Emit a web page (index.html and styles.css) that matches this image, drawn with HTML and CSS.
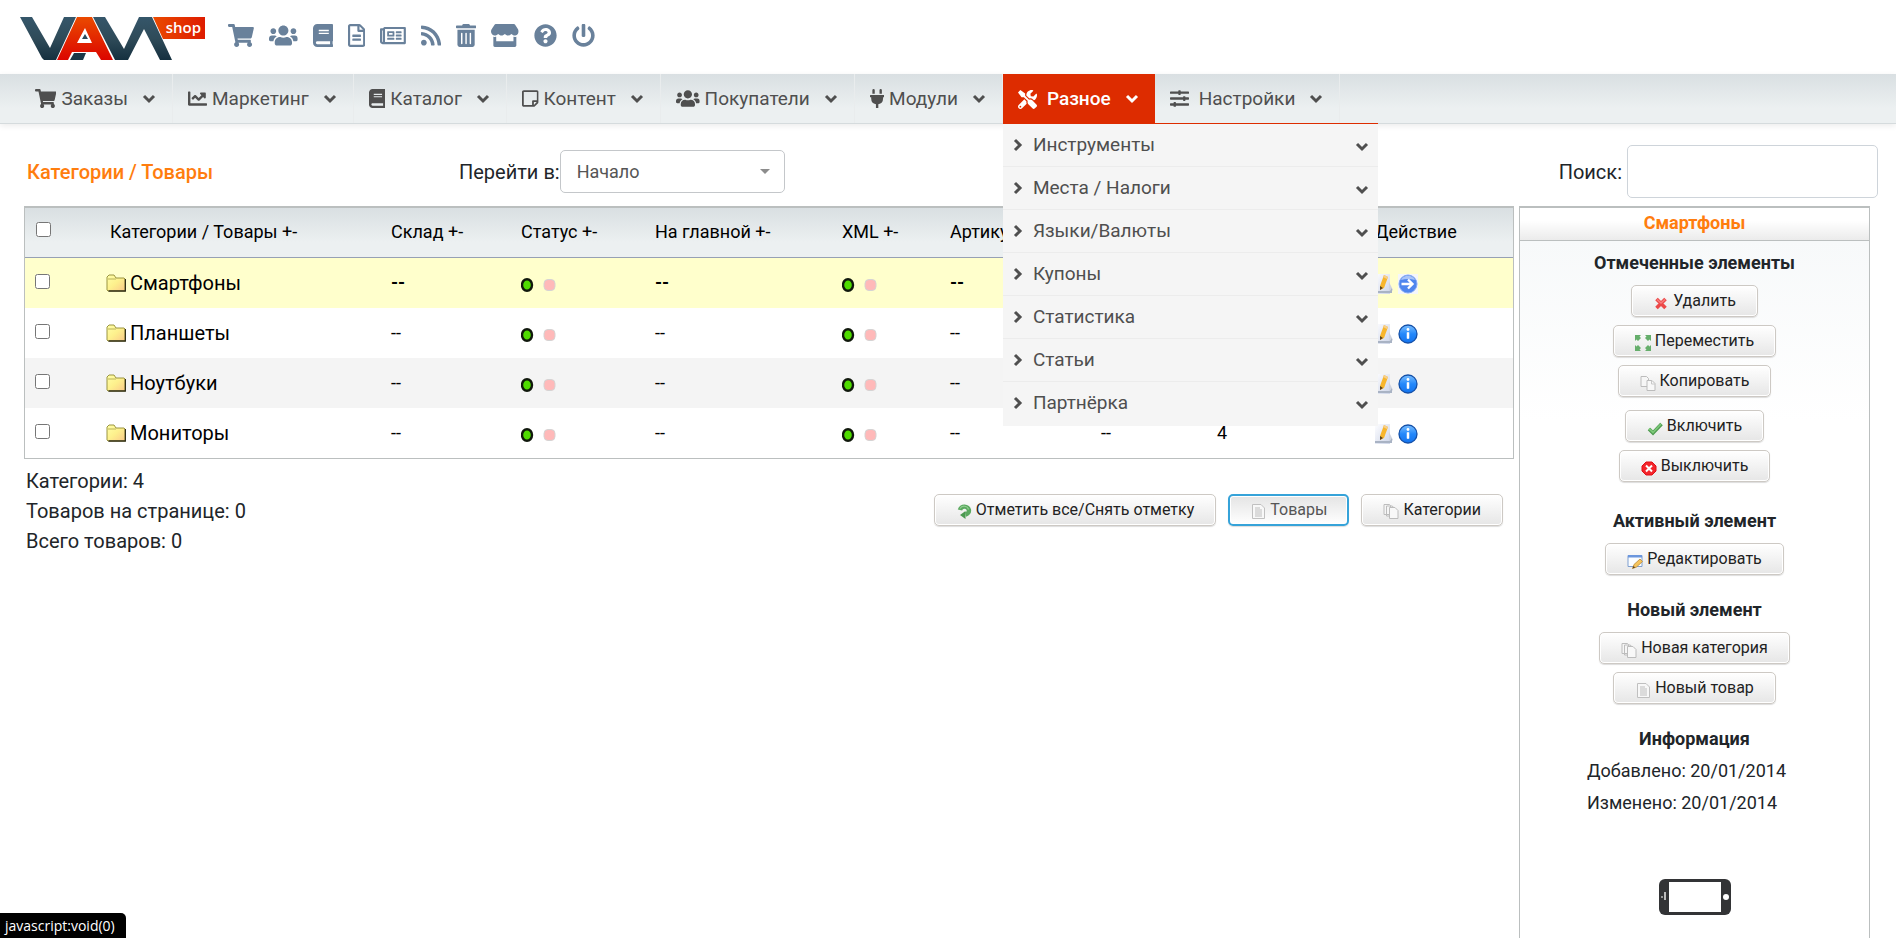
FILE: index.html
```html
<!DOCTYPE html>
<html lang="ru">
<head>
<meta charset="utf-8">
<title>Категории / Товары</title>
<link rel="stylesheet" href="styles.css">
</head>
<body>
<svg class="sprite" aria-hidden="true">
  <defs>
    <linearGradient id="g-steel" x1="0" y1="0" x2="0" y2="1"><stop offset="0" stop-color="#35566a"/><stop offset=".5" stop-color="#2f4b59"/><stop offset="1" stop-color="#15303f"/></linearGradient>
    <linearGradient id="g-red" x1="0" y1="0" x2="0" y2="1"><stop offset="0" stop-color="#ea4a00"/><stop offset="1" stop-color="#dc0500"/></linearGradient>
    <linearGradient id="g-tag" x1="0" y1="0" x2="1" y2="0"><stop offset="0" stop-color="#ea4a00"/><stop offset="1" stop-color="#de1c00"/></linearGradient>
    <linearGradient id="g-folder" x1="0" y1="0" x2="1" y2="1"><stop offset="0" stop-color="#ffffa8"/><stop offset=".5" stop-color="#fdf08c"/><stop offset="1" stop-color="#fbc98a"/></linearGradient>
    <linearGradient id="g-blue" x1="0" y1="0" x2="0" y2="1"><stop offset="0" stop-color="#7cc0ff"/><stop offset=".5" stop-color="#2388fb"/><stop offset="1" stop-color="#1474ee"/></linearGradient>
    <linearGradient id="g-paper" x1="0" y1="0" x2="1" y2="1"><stop offset="0" stop-color="#fdfdff"/><stop offset="1" stop-color="#cdd5e8"/></linearGradient>
  </defs>
  <symbol id="i-cart" viewBox="0 0 576 512"><path d="M528.12 301.319l47.273-208C578.806 78.301 567.391 64 551.99 64H159.208l-9.166-44.81C147.758 8.021 137.93 0 126.529 0H24C10.745 0 0 10.745 0 24v16c0 13.255 10.745 24 24 24h69.883l70.248 343.435C147.325 417.1 136 435.222 136 456c0 30.928 25.072 56 56 56s56-25.072 56-56c0-15.674-6.447-29.835-16.824-40h209.647C430.447 426.165 424 440.326 424 456c0 30.928 25.072 56 56 56s56-25.072 56-56c0-22.172-12.888-41.332-31.579-50.405l5.517-24.276c3.413-15.018-8.002-29.319-23.403-29.319H218.117l-6.545-32h293.145c11.206 0 20.92-7.754 23.403-18.681z"/></symbol>
  <symbol id="i-users" viewBox="0 0 640 512"><path d="M96 224c35.3 0 64-28.7 64-64s-28.7-64-64-64-64 28.7-64 64 28.7 64 64 64zm448 0c35.3 0 64-28.7 64-64s-28.7-64-64-64-64 28.7-64 64 28.7 64 64 64zm32 32h-64c-17.6 0-33.5 7.1-45.1 18.6 40.3 22.1 68.9 62 75.1 109.4h66c17.7 0 32-14.3 32-32v-32c0-35.3-28.7-64-64-64zm-256 0c61.9 0 112-50.1 112-112S381.9 32 320 32 208 82.1 208 144s50.1 112 112 112zm76.8 32h-8.3c-20.8 10-43.9 16-68.5 16s-47.6-6-68.5-16h-8.3C179.6 288 128 339.6 128 403.2V432c0 26.5 21.5 48 48 48h288c26.5 0 48-21.5 48-48v-28.8c0-63.6-51.6-115.2-115.2-115.2zm-223.7-13.4C161.5 263.1 145.6 256 128 256H64c-35.3 0-64 28.7-64 64v32c0 17.7 14.3 32 32 32h65.9c6.3-47.4 34.9-87.3 75.2-109.4z"/></symbol>
  <symbol id="i-book" viewBox="0 0 448 512"><path d="M448 360V24c0-13.3-10.7-24-24-24H96C43 0 0 43 0 96v320c0 53 43 96 96 96h328c13.3 0 24-10.7 24-24v-16c0-7.5-3.5-14.3-8.9-18.7-4.2-15.4-4.2-59.3 0-74.7 5.4-4.3 8.9-11.1 8.9-18.6zM128 134c0-3.3 2.7-6 6-6h212c3.3 0 6 2.7 6 6v20c0 3.3-2.7 6-6 6H134c-3.3 0-6-2.7-6-6v-20zm0 64c0-3.3 2.7-6 6-6h212c3.3 0 6 2.7 6 6v20c0 3.3-2.7 6-6 6H134c-3.3 0-6-2.7-6-6v-20zm253.4 250H96c-17.7 0-32-14.3-32-32 0-17.6 14.4-32 32-32h285.4c-1.9 17.1-1.9 46.9 0 64z"/></symbol>
  <symbol id="i-file" viewBox="0 0 384 512"><path d="M288 248v28c0 6.600-5.400 12-12 12H108c-6.600 0-12-5.400-12-12v-28c0-6.600 5.400-12 12-12h168c6.600 0 12 5.400 12 12zm-12 72H108c-6.600 0-12 5.400-12 12v28c0 6.600 5.400 12 12 12h168c6.600 0 12-5.400 12-12v-28c0-6.600-5.400-12-12-12zm108-188.100V464c0 26.500-21.500 48-48 48H48c-26.500 0-48-21.500-48-48V48C0 21.500 21.500 0 48 0h204.100C264.800 0 277 5.100 286 14.100L369.900 98c9 8.900 14.100 21.200 14.100 33.900zm-128-80V128h76.100L256 51.900zM336 464V176H232c-13.300 0-24-10.700-24-24V48H48v416h288z"/></symbol>
  <symbol id="i-news" viewBox="0 0 576 512"><path d="M552 64H112c-20.858 0-38.643 13.377-45.248 32H24c-13.255 0-24 10.745-24 24v272c0 30.928 25.072 56 56 56h496c13.255 0 24-10.745 24-24V88c0-13.255-10.745-24-24-24zM48 392V144h16v248c0 4.411-3.589 8-8 8s-8-3.589-8-8zm480 8H111.422c.374-2.614.578-5.283.578-8V112h416v288zM172 280h136c6.627 0 12-5.373 12-12v-96c0-6.627-5.373-12-12-12H172c-6.627 0-12 5.373-12 12v96c0 6.627 5.373 12 12 12zm28-80h80v40h-80v-40zm-40 140v-24c0-6.627 5.373-12 12-12h136c6.627 0 12 5.373 12 12v24c0 6.627-5.373 12-12 12H172c-6.627 0-12-5.373-12-12zm192 0v-24c0-6.627 5.373-12 12-12h104c6.627 0 12 5.373 12 12v24c0 6.627-5.373 12-12 12H364c-6.627 0-12-5.373-12-12zm0-144v-24c0-6.627 5.373-12 12-12h104c6.627 0 12 5.373 12 12v24c0 6.627-5.373 12-12 12H364c-6.627 0-12-5.373-12-12zm0 72v-24c0-6.627 5.373-12 12-12h104c6.627 0 12 5.373 12 12v24c0 6.627-5.373 12-12 12H364c-6.627 0-12-5.373-12-12z"/></symbol>
  <symbol id="i-rss" viewBox="0 0 448 512"><path d="M128.081 415.959c0 35.369-28.672 64.041-64.041 64.041S0 451.328 0 415.959s28.672-64.041 64.041-64.041 64.040 28.673 64.040 64.041zm175.660 47.250c-8.354-154.600-132.185-278.587-286.950-286.950C7.656 175.765 0 183.105 0 192.253v48.069c0 8.415 6.490 15.472 14.887 16.018 111.832 7.284 201.473 96.702 208.772 208.772.547 8.397 7.604 14.887 16.018 14.887h48.069c9.149.001 16.489-7.655 15.995-16.790zm144.249.288C439.596 229.677 251.465 40.445 16.503 32.010 7.473 31.686 0 38.981 0 48.016v48.068c0 8.625 6.835 15.645 15.453 15.999 191.179 7.839 344.627 161.316 352.465 352.465.353 8.618 7.373 15.453 15.999 15.453h48.068c9.034-.001 16.329-7.474 16.005-16.504z"/></symbol>
  <symbol id="i-trash" viewBox="0 0 448 512"><path d="M32 464a48 48 0 0 0 48 48h288a48 48 0 0 0 48-48V128H32zm272-256a16 16 0 0 1 32 0v224a16 16 0 0 1-32 0zm-96 0a16 16 0 0 1 32 0v224a16 16 0 0 1-32 0zm-96 0a16 16 0 0 1 32 0v224a16 16 0 0 1-32 0zM432 32H312l-9.400-18.700A24 24 0 0 0 281.100 0H166.800a23.720 23.720 0 0 0-21.400 13.300L136 32H16A16 16 0 0 0 0 48v32a16 16 0 0 0 16 16h416a16 16 0 0 0 16-16V48a16 16 0 0 0-16-16z"/></symbol>
  <symbol id="i-store" viewBox="0 0 616 512"><path d="M602 118.600L537.100 15C531.300 5.700 521 0 510 0H106C95 0 84.700 5.700 78.900 15L14 118.600c-33.500 53.500-3.800 127.900 58.800 136.400 4.500.6 9.100.9 13.700.9 29.600 0 55.800-13 73.800-33.100 18 20.100 44.300 33.100 73.800 33.100 29.600 0 55.800-13 73.800-33.100 18 20.100 44.300 33.100 73.800 33.100 29.600 0 55.800-13 73.800-33.100 18.100 20.100 44.300 33.100 73.800 33.100 4.700 0 9.200-.3 13.700-.9 62.800-8.400 92.600-82.800 59-136.400zM529.500 288c-10 0-19.900-1.500-29.500-3.800V384H116v-99.800c-9.600 2.200-19.500 3.800-29.500 3.800-6 0-12.100-.4-18-1.200-5.600-.8-11.100-2.100-16.400-3.600V480c0 17.700 14.300 32 32 32h448c17.700 0 32-14.300 32-32V283.200c-5.400 1.600-10.800 2.900-16.400 3.600-6.100.8-12.100 1.200-18.200 1.200z"/></symbol>
  <symbol id="i-help" viewBox="0 0 512 512"><path d="M504 256c0 136.997-111.043 248-248 248S8 392.997 8 256C8 119.083 119.043 8 256 8s248 111.083 248 248zM262.655 90c-54.497 0-89.255 22.957-116.549 63.758-3.536 5.286-2.353 12.415 2.715 16.258l34.699 26.310c5.205 3.947 12.621 3.008 16.665-2.122 17.864-22.658 30.113-35.797 57.303-35.797 20.429 0 45.698 13.148 45.698 32.958 0 14.976-12.363 22.667-32.534 33.976C247.128 238.528 216 254.941 216 296v4c0 6.627 5.373 12 12 12h56c6.627 0 12-5.373 12-12v-1.333c0-28.462 83.186-29.647 83.186-106.667 0-58.002-60.165-102-116.531-102zM256 338c-25.365 0-46 20.635-46 46 0 25.364 20.635 46 46 46s46-20.636 46-46c0-25.365-20.635-46-46-46z"/></symbol>
  <symbol id="i-power" viewBox="0 0 512 512"><path d="M400 54.100c63 45 104 118.600 104 201.900 0 136.800-110.800 247.700-247.500 248C120 504.300 8.200 393 8 256.400 7.900 173.100 48.900 99.300 111.800 54.200c11.700-8.300 28-4.800 35 7.700L162.600 90c5.900 10.500 3.100 23.800-6.600 31-41.500 30.800-68 79.600-68 134.900-.1 92.300 74.500 168.100 168 168.100 91.600 0 168.600-74.200 168-169.100-.3-51.800-24.700-101.800-68.100-134-9.700-7.200-12.400-20.500-6.500-30.900l15.800-28.100c7-12.400 23.200-16.100 34.800-7.800zM296 264V24c0-13.300-10.700-24-24-24h-32c-13.300 0-24 10.700-24 24v240c0 13.300 10.700 24 24 24h32c13.300 0 24-10.700 24-24z"/></symbol>
  <symbol id="i-chart" viewBox="0 0 512 512"><path d="M496 384H64V80c0-8.840-7.160-16-16-16H16C7.160 64 0 71.160 0 80v336c0 17.670 14.330 32 32 32h464c8.840 0 16-7.160 16-16v-32c0-8.840-7.160-16-16-16zM464 96H345.940c-21.380 0-32.090 25.850-16.970 40.970l32.400 32.400L288 242.750l-73.370-73.370c-12.500-12.500-32.760-12.500-45.250 0l-68.690 68.690c-6.250 6.250-6.250 16.380 0 22.630l22.620 22.620c6.250 6.250 16.380 6.250 22.630 0L192 237.250l73.370 73.370c12.500 12.500 32.760 12.500 45.250 0l96-96 32.400 32.400c15.120 15.120 40.970 4.410 40.970-16.970V112c.01-8.840-7.150-16-15.990-16z"/></symbol>
  <symbol id="i-note" viewBox="0 0 448 512"><path d="M448 348.106V80c0-26.510-21.490-48-48-48H48C21.490 32 0 53.490 0 80v351.988c0 26.510 21.490 48 48 48h268.118a48 48 0 0 0 33.941-14.059l83.882-83.882A48 48 0 0 0 448 348.106zm-128 80.005v-76.118h76.118L320 428.111zM400 80v223.988H296c-13.255 0-24 10.745-24 24v104H48V80h352z"/></symbol>
  <symbol id="i-plug" viewBox="0 0 384 512"><path d="M320,32a32,32,0,0,0-64,0v96h64Zm48,128H16A16,16,0,0,0,0,176v32a16,16,0,0,0,16,16H32v32A160.070,160.070,0,0,0,160,412.800V512h64V412.800A160.070,160.070,0,0,0,352,256V224h16a16,16,0,0,0,16-16V176A16,16,0,0,0,368,160ZM128,32a32,32,0,0,0-64,0v96h64Z"/></symbol>
  <symbol id="i-tools" viewBox="0 0 512 512"><path d="M501.100 395.700L384 278.600c-23.100-23.100-57.600-27.600-85.400-13.900L192 158.100V96L64 0 0 64l96 128h62.100l106.600 106.600c-13.600 27.800-9.200 62.300 13.900 85.400l117.100 117.100c14.600 14.600 38.200 14.600 52.700 0l52.700-52.700c14.500-14.600 14.500-38.200 0-52.700zM331.700 225c28.300 0 54.900 11 74.900 31l19.400 19.400c15.800-6.900 30.800-16.500 43.800-29.500 37.100-37.100 49.700-89.300 37.900-136.700-2.200-9-13.500-12.100-20.100-5.500l-74.400 74.400-67.900-11.300L334 98.900l74.400-74.400c6.600-6.600 3.400-17.900-5.700-20.200-47.400-11.700-99.600.9-136.600 37.900-28.500 28.500-41.900 66.100-41.200 103.600l82.100 82.100c8.100-1.900 16.500-2.900 24.700-2.900zm-103.900 82l-56.700-56.700L18.700 402.800c-25 25-25 65.500 0 90.500s65.500 25 90.500 0l123.600-123.600c-7.600-19.900-9.900-41.600-5-62.700zM64 472c-13.200 0-24-10.800-24-24 0-13.300 10.700-24 24-24s24 10.700 24 24c0 13.200-10.700 24-24 24z"/></symbol>
  <symbol id="i-sliders" viewBox="0 0 512 512"><path d="M496 384H160v-16c0-8.800-7.200-16-16-16h-32c-8.800 0-16 7.200-16 16v16H16c-8.800 0-16 7.200-16 16v32c0 8.800 7.200 16 16 16h80v16c0 8.800 7.200 16 16 16h32c8.800 0 16-7.200 16-16v-16h336c8.800 0 16-7.200 16-16v-32c0-8.800-7.200-16-16-16zm0-160h-80v-16c0-8.800-7.200-16-16-16h-32c-8.800 0-16 7.200-16 16v16H16c-8.800 0-16 7.200-16 16v32c0 8.800 7.200 16 16 16h336v16c0 8.800 7.200 16 16 16h32c8.800 0 16-7.200 16-16v-16h80c8.800 0 16-7.200 16-16v-32c0-8.800-7.200-16-16-16zm0-160H288V48c0-8.800-7.200-16-16-16h-32c-8.800 0-16 7.200-16 16v16H16C7.200 64 0 71.200 0 80v32c0 8.800 7.200 16 16 16h208v16c0 8.800 7.200 16 16 16h32c8.800 0 16-7.200 16-16v-16h208c8.800 0 16-7.200 16-16V80c0-8.800-7.200-16-16-16z"/></symbol>
  <symbol id="i-down" viewBox="0 0 14 10"><path d="M2 2l5 5 5-5" fill="none" stroke="currentColor" stroke-width="3"/></symbol>
  <symbol id="i-right" viewBox="0 0 10 14"><path d="M2 2l5 5-5 5" fill="none" stroke="currentColor" stroke-width="3"/></symbol>
  <symbol id="i-folder" viewBox="0 0 20 18"><path d="M1 3l2-2h5l2 3h8l1 1v12H2l-1-1z" fill="url(#g-folder)" stroke="#9a9440" stroke-width="1"/><path d="M2.500 17h17V5" fill="none" stroke="#33301a" stroke-width="1.400"/><path d="M2 5h8" stroke="#b9b35a"/></symbol>
  <symbol id="i-dots" viewBox="0 0 36 14"><ellipse cx="6" cy="7" rx="5" ry="5.800" fill="#4fdc00" stroke="#10180c" stroke-width="2.400"/><rect x="23" y="1.500" width="11" height="11" rx="4" fill="#ffb9b9" stroke="#d4d4d4"/></symbol>
  <symbol id="i-edit" viewBox="0 0 20 20"><path d="M0 0h15v20H0z" fill="url(#g-paper)"/><path d="M14 8l4 8-4 3z" fill="#cfd4df"/><path d="M0 17h15l2-3v5H0z" fill="#a9b3c4"/><path d="M9 1l4 2-4 11-4 2 0-4z" fill="#f8b62c"/><path d="M5 12l3 2-3 2z" fill="#5b4422"/><path d="M9 1l4 2-1 2-4-2z" fill="#f6cf8b"/></symbol>
  <symbol id="i-info" viewBox="0 0 20 20"><circle cx="10" cy="10" r="9" fill="url(#g-blue)" stroke="#1450a8" stroke-width="1.300"/><circle cx="10" cy="5.500" r="1.400" fill="#fff"/><path d="M9 8.500h2v6H9z" fill="#fff" stroke="#fff" stroke-width=".5"/></symbol>
  <symbol id="i-go" viewBox="0 0 20 20"><path d="M0 0h20v20H0z" fill="#f4f6fb"/><circle cx="10" cy="10" r="9" fill="#4f86ee" stroke="#84a9f2"/><path d="M3 6a8 8 0 0 1 14 0q-7-2-14 0" fill="#a9c4f8"/><path d="M3.500 10h10M10 5.500l4.500 4.500-4.500 4.500" fill="none" stroke="#fff" stroke-width="2.400"/></symbol>
  <symbol id="i-del" viewBox="0 0 16 16"><path d="M3.500 4l9 9M12.500 4l-9 9" stroke="#ec4848" stroke-width="3.600"/><path d="M4 4.500l4 3.500 4-3.500" fill="none" stroke="#f87c7c" stroke-width="1.600"/></symbol>
  <symbol id="i-move" viewBox="0 0 16 16"><path d="M0 0h6L4.500 1.500 6 3 3 6 1.500 4.500 0 6zM16 0v6l-1.500-1.500L13 6l-3-3 1.500-1.500L10 0zM0 16v-6l1.500 1.500L3 10l3 3-1.500 1.500L6 16zM16 16h-6l1.500-1.500L10 13l3-3 1.500 1.500L16 10z" fill="#65ae6b"/></symbol>
  <symbol id="i-copy" viewBox="0 0 16 16"><path d="M1 1.500h5.500l2 2v8H1z" fill="#f6f6f6" stroke="#bcbcbc"/><path d="M7 5.500h5l3 3v7H7z" fill="#f8f8f8" stroke="#bcbcbc"/><path d="M11.500 5.500V9H15" fill="none" stroke="#c8c8c8"/></symbol>
  <symbol id="i-ok" viewBox="0 0 16 16"><path d="M2 9l4 4 8.500-9" fill="none" stroke="#4e9a50" stroke-width="3.600"/><path d="M2 8.500l4 4 8-8.500" fill="none" stroke="#7cc878" stroke-width="1.800"/></symbol>
  <symbol id="i-off" viewBox="0 0 16 16"><path d="M5 2h6l4 4v5l-4 4H5l-4-4V6z" fill="#f3252b" stroke="#e00f16"/><path d="M5 5.500l6 6M11 5.500l-6 6" stroke="#fff" stroke-width="2"/></symbol>
  <symbol id="i-modify" viewBox="0 0 16 16"><path d="M1 2.500h14v11H1z" fill="#fbfdff" stroke="#7f9fd0"/><path d="M1 2h14v2.500H1z" fill="#6c97dd"/><path d="M13 6l2.500 2.500-6 5.500-4 1.500 1.500-4z" fill="#f6c45c" stroke="#b98a3a" stroke-width=".8"/><path d="M5.500 15.500l1-2.500 1.800 1.600z" fill="#614520"/></symbol>
  <symbol id="i-pages" viewBox="0 0 16 16"><path d="M1 1.500h5.500l1 1v9H1zM3.500 3h5.500l1.500 1v9h-7z" fill="#f6f6f6" stroke="#bcbcbc"/><path d="M6.500 4.500h5.500l3 3v8H6.500z" fill="#f8f8f8" stroke="#bcbcbc"/></symbol>
  <symbol id="i-page" viewBox="0 0 16 16"><path d="M2.500 1.500h8.500l3.500 3.500v10.500h-12z" fill="#f8f8f8" stroke="#c0c0c0"/><path d="M5 5h5M5 7h7M5 9h7M5 11h7M5 13h7" stroke="#bebebe"/></symbol>
  <symbol id="i-refresh" viewBox="0 0 16 16"><path d="M4 7A4.500 4 0 1 1 9.500 11.500" fill="none" stroke="#5aa95f" stroke-width="4.400"/><path d="M9.500 8v8L4 12z" fill="#4b9950"/><path d="M4 5.500a4.500 4 0 0 1 8.500 1" fill="none" stroke="#93cf92" stroke-width="1.200"/></symbol>
</svg>

<header class="top">
  <a class="logo" href="#" aria-label="VaM Shop">
    <svg class="logo-art" viewBox="0 0 186 44">
      <path d="M0 0H12L30 31L44 0H56L36 43H24L22 41Z" fill="url(#g-steel)"/>
      <path d="M73 0H85L104 32L119 0H132L152 43H140L124 12L108 43H95Z" fill="url(#g-steel)"/>
      <path d="M54 36H66L63 43H50Z" fill="#1b3747"/>
      <path d="M57 0H72L93 43H81L76 35H52L48 43H37ZM65 11L57 26H72Z" fill="url(#g-red)" fill-rule="evenodd"/>
      <path d="M65 17L68 22H62Z" fill="#2c4a5a"/>
      <path d="M133 0H185V22H143Z" fill="url(#g-tag)"/>
    </svg>
    <span class="logo-tag">shop</span>
  </a>
  <div class="quick">
    <a href="#" aria-label="Заказы"><svg class="qi" viewBox="0 0 576 512"><use href="#i-cart"/></svg></a>
    <a href="#" aria-label="Покупатели"><svg class="qi" viewBox="0 0 640 512"><use href="#i-users"/></svg></a>
    <a href="#" aria-label="Каталог"><svg class="qi" viewBox="0 0 448 512"><use href="#i-book"/></svg></a>
    <a href="#" aria-label="Страницы"><svg class="qi" viewBox="0 0 384 512"><use href="#i-file"/></svg></a>
    <a href="#" aria-label="Новости"><svg class="qi" viewBox="0 0 576 512"><use href="#i-news"/></svg></a>
    <a href="#" aria-label="RSS"><svg class="qi" viewBox="0 0 448 512"><use href="#i-rss"/></svg></a>
    <a href="#" aria-label="Очистить"><svg class="qi" viewBox="0 0 448 512"><use href="#i-trash"/></svg></a>
    <a href="#" aria-label="Магазин"><svg class="qi" viewBox="0 0 616 512"><use href="#i-store"/></svg></a>
    <a href="#" aria-label="Помощь"><svg class="qi" viewBox="0 0 512 512"><use href="#i-help"/></svg></a>
    <a href="#" aria-label="Выход"><svg class="qi" viewBox="0 0 512 512"><use href="#i-power"/></svg></a>
  </div>
</header>

<nav class="nav">
  <div class="nav-item"><a href="#"><svg class="ni" viewBox="0 0 576 512"><use href="#i-cart"/></svg>Заказы<svg class="caret"><use href="#i-down"/></svg></a></div>
  <div class="nav-item"><a href="#"><svg class="ni" viewBox="0 0 512 512"><use href="#i-chart"/></svg>Маркетинг<svg class="caret"><use href="#i-down"/></svg></a></div>
  <div class="nav-item"><a href="#"><svg class="ni" viewBox="0 0 448 512"><use href="#i-book"/></svg>Каталог<svg class="caret"><use href="#i-down"/></svg></a></div>
  <div class="nav-item"><a href="#"><svg class="ni" viewBox="0 0 448 512"><use href="#i-note"/></svg>Контент<svg class="caret"><use href="#i-down"/></svg></a></div>
  <div class="nav-item"><a href="#"><svg class="ni" viewBox="0 0 640 512"><use href="#i-users"/></svg>Покупатели<svg class="caret"><use href="#i-down"/></svg></a></div>
  <div class="nav-item"><a href="#"><svg class="ni" viewBox="0 0 384 512"><use href="#i-plug"/></svg>Модули<svg class="caret"><use href="#i-down"/></svg></a></div>
  <div class="nav-item nav-open"><a class="wide" href="#"><svg class="ni" viewBox="0 0 512 512"><use href="#i-tools"/></svg>Разное<svg class="caret"><use href="#i-down"/></svg></a>
    <ul class="menu">
      <li><a href="#"><svg class="arrow"><use href="#i-right"/></svg>Инструменты<svg class="caret"><use href="#i-down"/></svg></a></li>
      <li><a href="#"><svg class="arrow"><use href="#i-right"/></svg>Места / Налоги<svg class="caret"><use href="#i-down"/></svg></a></li>
      <li><a href="#"><svg class="arrow"><use href="#i-right"/></svg>Языки/Валюты<svg class="caret"><use href="#i-down"/></svg></a></li>
      <li><a href="#"><svg class="arrow"><use href="#i-right"/></svg>Купоны<svg class="caret"><use href="#i-down"/></svg></a></li>
      <li><a href="#"><svg class="arrow"><use href="#i-right"/></svg>Статистика<svg class="caret"><use href="#i-down"/></svg></a></li>
      <li><a href="#"><svg class="arrow"><use href="#i-right"/></svg>Статьи<svg class="caret"><use href="#i-down"/></svg></a></li>
      <li><a href="#"><svg class="arrow"><use href="#i-right"/></svg>Партнёрка<svg class="caret"><use href="#i-down"/></svg></a></li>
    </ul>
  </div>
  <div class="nav-item"><a class="wide" href="#"><svg class="ni" viewBox="0 0 512 512"><use href="#i-sliders"/></svg>Настройки<svg class="caret"><use href="#i-down"/></svg></a></div>
</nav>

<div class="heading">
  <h1>Категории / Товары</h1>
  <div class="jump"><label for="jump">Перейти в:</label><select id="jump"><option>Начало</option></select></div>
  <div class="search"><label for="search">Поиск:</label><input id="search" type="text"></div>
</div>

<main class="main">
  <section class="list">
    <table>
      <colgroup><col class="c-check"><col class="c-name"><col class="c-stock"><col class="c-status"><col class="c-front"><col class="c-xml"><col class="c-sku"><col class="c-price"><col class="c-sort"><col class="c-action"></colgroup>
      <thead>
        <tr><th><input type="checkbox" aria-label="Отметить все"></th><th class="name-head">Категории / Товары +-</th><th>Склад +-</th><th>Статус +-</th><th>На главной +-</th><th>XML +-</th><th>Артикул</th><th></th><th></th><th>Действие</th></tr>
      </thead>
      <tbody>
        <tr class="selected"><td><input type="checkbox" aria-label="Смартфоны"></td><td><a class="name" href="#"><svg class="folder"><use href="#i-folder"/></svg>Смартфоны</a></td><td>--</td><td><svg class="dots"><use href="#i-dots"/></svg></td><td>--</td><td><svg class="dots"><use href="#i-dots"/></svg></td><td>--</td><td></td><td></td><td><div class="acts"><svg class="act"><use href="#i-edit"/></svg><svg class="act"><use href="#i-go"/></svg></div></td></tr>
        <tr><td><input type="checkbox" aria-label="Планшеты"></td><td><a class="name" href="#"><svg class="folder"><use href="#i-folder"/></svg>Планшеты</a></td><td>--</td><td><svg class="dots"><use href="#i-dots"/></svg></td><td>--</td><td><svg class="dots"><use href="#i-dots"/></svg></td><td>--</td><td></td><td></td><td><div class="acts"><svg class="act"><use href="#i-edit"/></svg><svg class="act"><use href="#i-info"/></svg></div></td></tr>
        <tr class="odd"><td><input type="checkbox" aria-label="Ноутбуки"></td><td><a class="name" href="#"><svg class="folder"><use href="#i-folder"/></svg>Ноутбуки</a></td><td>--</td><td><svg class="dots"><use href="#i-dots"/></svg></td><td>--</td><td><svg class="dots"><use href="#i-dots"/></svg></td><td>--</td><td></td><td></td><td><div class="acts"><svg class="act"><use href="#i-edit"/></svg><svg class="act"><use href="#i-info"/></svg></div></td></tr>
        <tr><td><input type="checkbox" aria-label="Мониторы"></td><td><a class="name" href="#"><svg class="folder"><use href="#i-folder"/></svg>Мониторы</a></td><td>--</td><td><svg class="dots"><use href="#i-dots"/></svg></td><td>--</td><td><svg class="dots"><use href="#i-dots"/></svg></td><td>--</td><td>--</td><td>4</td><td><div class="acts"><svg class="act"><use href="#i-edit"/></svg><svg class="act"><use href="#i-info"/></svg></div></td></tr>
      </tbody>
    </table>
    <div class="foot">
      <div class="totals"><div>Категории: 4</div><div>Товаров на странице: 0</div><div>Всего товаров: 0</div></div>
      <div class="foot-buttons">
        <button class="btn"><svg class="bi"><use href="#i-refresh"/></svg>Отметить все/Снять отметку</button>
        <button class="btn btn-focus"><svg class="bi"><use href="#i-page"/></svg>Товары</button>
        <button class="btn"><svg class="bi"><use href="#i-pages"/></svg>Категории</button>
      </div>
    </div>
  </section>

  <aside class="side">
    <h2>Смартфоны</h2>
    <div class="side-body">
      <h3>Отмеченные элементы</h3>
      <div class="stack">
        <button class="btn"><svg class="bi"><use href="#i-del"/></svg>Удалить</button>
        <button class="btn"><svg class="bi"><use href="#i-move"/></svg>Переместить</button>
        <button class="btn"><svg class="bi"><use href="#i-copy"/></svg>Копировать</button>
      </div>
      <div class="stack">
        <button class="btn"><svg class="bi"><use href="#i-ok"/></svg>Включить</button>
        <button class="btn"><svg class="bi"><use href="#i-off"/></svg>Выключить</button>
      </div>
      <h3>Активный элемент</h3>
      <div class="stack">
        <button class="btn"><svg class="bi"><use href="#i-modify"/></svg>Редактировать</button>
      </div>
      <h3>Новый элемент</h3>
      <div class="stack">
        <button class="btn"><svg class="bi"><use href="#i-pages"/></svg>Новая категория</button>
        <button class="btn"><svg class="bi"><use href="#i-page"/></svg>Новый товар</button>
      </div>
      <h3>Информация</h3>
      <div class="dates"><div>Добавлено: 20/01/2014</div><div>Изменено: 20/01/2014</div></div>
      <svg class="phone" viewBox="0 0 72 36"><rect x="0" y="0" width="72" height="36" rx="6" fill="#333436"/><rect x="10" y="3" width="52" height="30" fill="#fff"/><circle cx="67" cy="18" r="3" fill="#fff"/><path d="M6 13v8" stroke="#bbb" stroke-width="2"/><circle cx="3" cy="18" r="1" fill="#bbb"/></svg>
    </div>
  </aside>
</main>
<div class="status">javascript:void(0)</div>
</body>
</html>
```
FILE: styles.css
```css
* { box-sizing: border-box; }
body {
  margin: 0;
  min-height: 100vh;
  display: flex;
  flex-direction: column;
  background: #fff;
  color: #212529;
  font: 20px/30px Roboto, "Noto Sans", sans-serif;
}
a { color: inherit; text-decoration: none; }
h1, h2, h3, ul { margin: 0; padding: 0; }
svg { fill: currentColor; flex: none; }
.sprite { position: absolute; width: 0; height: 0; }

.top { display: flex; align-items: flex-start; gap: 22px; height: 74px; padding: 0 20px; }
.logo { position: relative; display: flex; width: 186px; margin-top: 17px; }
.logo-art { width: 186px; height: 44px; }
.logo-tag {
  position: absolute;
  top: 0;
  right: 5px;
  color: #fff;
  font: 600 15px/20px "Open Sans", sans-serif;
}
.quick { display: flex; gap: 15px; margin-top: 24px; color: #69819b; }
.quick a { display: flex; }
.qi { height: 23px; }

.nav {
  display: flex;
  padding-left: 20px;
  height: 50px;
  background: linear-gradient(#d9dfe2, #ecf0f1 70%);
  border-bottom: 1px solid #d5dbdd;
  box-shadow: 0 2px 6px rgba(0, 0, 0, .08);
  color: #4f4f4f;
  font-size: 19px;
}
.nav-item { position: relative; border-right: 1px solid #e9eced; }
.nav-item > a { display: flex; align-items: center; gap: 5px; height: 49px; padding: 0 16px 0 15px; }
.nav-item > .wide { gap: 10px; }
.ni { height: 19px; }
.caret { width: 14px; height: 10px; margin-left: 9px; }
.nav-item > .wide .caret { margin-left: 4px; }
.nav-open { border: 0; }
.nav-open > a { height: 50px; background: #dd2c00; color: #fff; font-weight: 500; }
.menu {
  position: absolute;
  z-index: 2;
  top: 49px;
  left: 0;
  width: 375px;
  padding-bottom: 2px;
  border-top: 1px solid #dd2c00;
  background: #f5f5f5;
  color: #4f4f4f;
  list-style: none;
}
.menu li + li { border-top: 1px solid #ececec; }
.menu a { display: flex; align-items: center; gap: 10px; padding: 6px 9px 6px 10px; }
.menu .caret { margin: 3px 0 0 auto; }
.arrow { width: 10px; height: 14px; }

.heading { display: flex; align-items: center; padding: 21px 18px 8px 27px; }
.heading h1 { flex: 0 0 432px; color: #ff7d0e; font-size: 20px; font-weight: 500; line-height: 30px; }
.jump { position: relative; display: flex; align-items: center; }
.jump select {
  appearance: none;
  width: 225px;
  height: 43px;
  padding: 0 16px;
  border: 1px solid #c4c7ca;
  border-radius: 5px;
  background: #fff;
  color: #555;
  font: 18px Roboto, sans-serif;
}
.jump::after {
  content: "";
  position: absolute;
  right: 15px;
  border: 5px solid transparent;
  border-top-color: #8c8c8c;
  border-bottom: 0;
}
.search { display: flex; align-items: center; gap: 5px; margin-left: auto; }
.search input {
  width: 251px;
  height: 53px;
  border: 1px solid #ced4da;
  border-radius: 5px;
  font: 20px Roboto, sans-serif;
}

.main { display: flex; flex: 1; gap: 5px; padding: 0 26px 0 24px; }
.list { flex: 1; }
table {
  width: 100%;
  table-layout: fixed;
  border-collapse: separate;
  border-spacing: 0;
  border: 1px solid #bbbfbf;
  border-top-width: 2px;
  color: #000;
}
.c-check { width: 69px; }
.c-name { width: 285px; }
.c-stock { width: 130px; }
.c-status { width: 134px; }
.c-front { width: 187px; }
.c-xml { width: 108px; }
.c-sku { width: 151px; }
.c-price { width: 116px; }
.c-sort { width: 158px; }
th { height: 50px; padding: 0 0 2px 12px; border-bottom: 1px solid #96a0b4; background: linear-gradient(#d9dfe2, #ecf0f1 70%); font-size: 18px; font-weight: 400; text-align: left; }
th.name-head { padding-left: 16px; }
td { height: 50px; padding: 0 0 0 12px; font-size: 18px; }
td input, th input { display: block; width: 15px; height: 15px; margin: 0 0 4px; }
td:first-child { padding-left: 10px; }
th:first-child { padding-left: 11px; }
.selected td { background: #ffffcc; font-weight: 700; }
.odd td { background: #f4f4f4; }
.name { display: flex; align-items: center; gap: 4px; font-size: 20px; font-weight: 400; }
.folder { width: 20px; height: 18px; }
.dots { display: block; width: 36px; height: 14px; margin-top: 3px; }
.acts { display: flex; gap: 3px; margin-top: 2px; }
.act { width: 20px; height: 20px; }

.foot { display: flex; align-items: center; justify-content: space-between; padding: 7px 11px 0 2px; }
.foot-buttons { display: flex; gap: 12px; margin-bottom: 3px; }
.btn {
  display: flex;
  align-items: center;
  gap: 4px;
  height: 32px;
  padding: 0 21px;
  border: 1px solid #cdc9c4;
  border-radius: 5px;
  background: linear-gradient(#fff, #e6e6e6);
  box-shadow: inset 0 0 0 1px #fff, 0 1px 1px #ddd;
  color: #222;
  font: 16px/20px Roboto, sans-serif;
}
.btn-focus { border: 2px solid #36a3d9; padding: 0 20px; background: linear-gradient(#e4e4e4, #fff); color: #555; }
.bi { width: 16px; height: 16px; margin-top: 3px; }

.side { flex: 0 0 351px; border: 1px solid #bbbfbf; border-top-width: 2px; border-bottom: 0; }
.side h2 { height: 33px; border-bottom: 1px solid #bbbfbf; background: linear-gradient(#fff 40%, #ebebeb); color: #ff7d0e; font-size: 18px; font-weight: 700; line-height: 30px; text-align: center; }
.side-body { display: flex; flex-direction: column; align-items: center; padding-top: 6px; background: linear-gradient(#f7f9fa, #fff 180px); }
.side h3 { font-size: 18px; font-weight: 700; line-height: 32px; }
.stack { display: flex; flex-direction: column; align-items: center; gap: 8px; margin: 6px 0 7px; }
.stack + .stack { margin-bottom: 11px; }
.stack + h3 { margin-top: 12px; }
.dates { padding-right: 16px; line-height: 32px; font-size: 18px; }
.phone { width: 72px; height: 36px; margin-top: 60px; }

.status {
  position: fixed;
  left: 0;
  bottom: 0;
  padding: 3px 11px 2px 5px;
  border-radius: 0 5px 0 0;
  background: #000;
  color: #fff;
  font: 14px/20px "Open Sans", sans-serif;
}
```
